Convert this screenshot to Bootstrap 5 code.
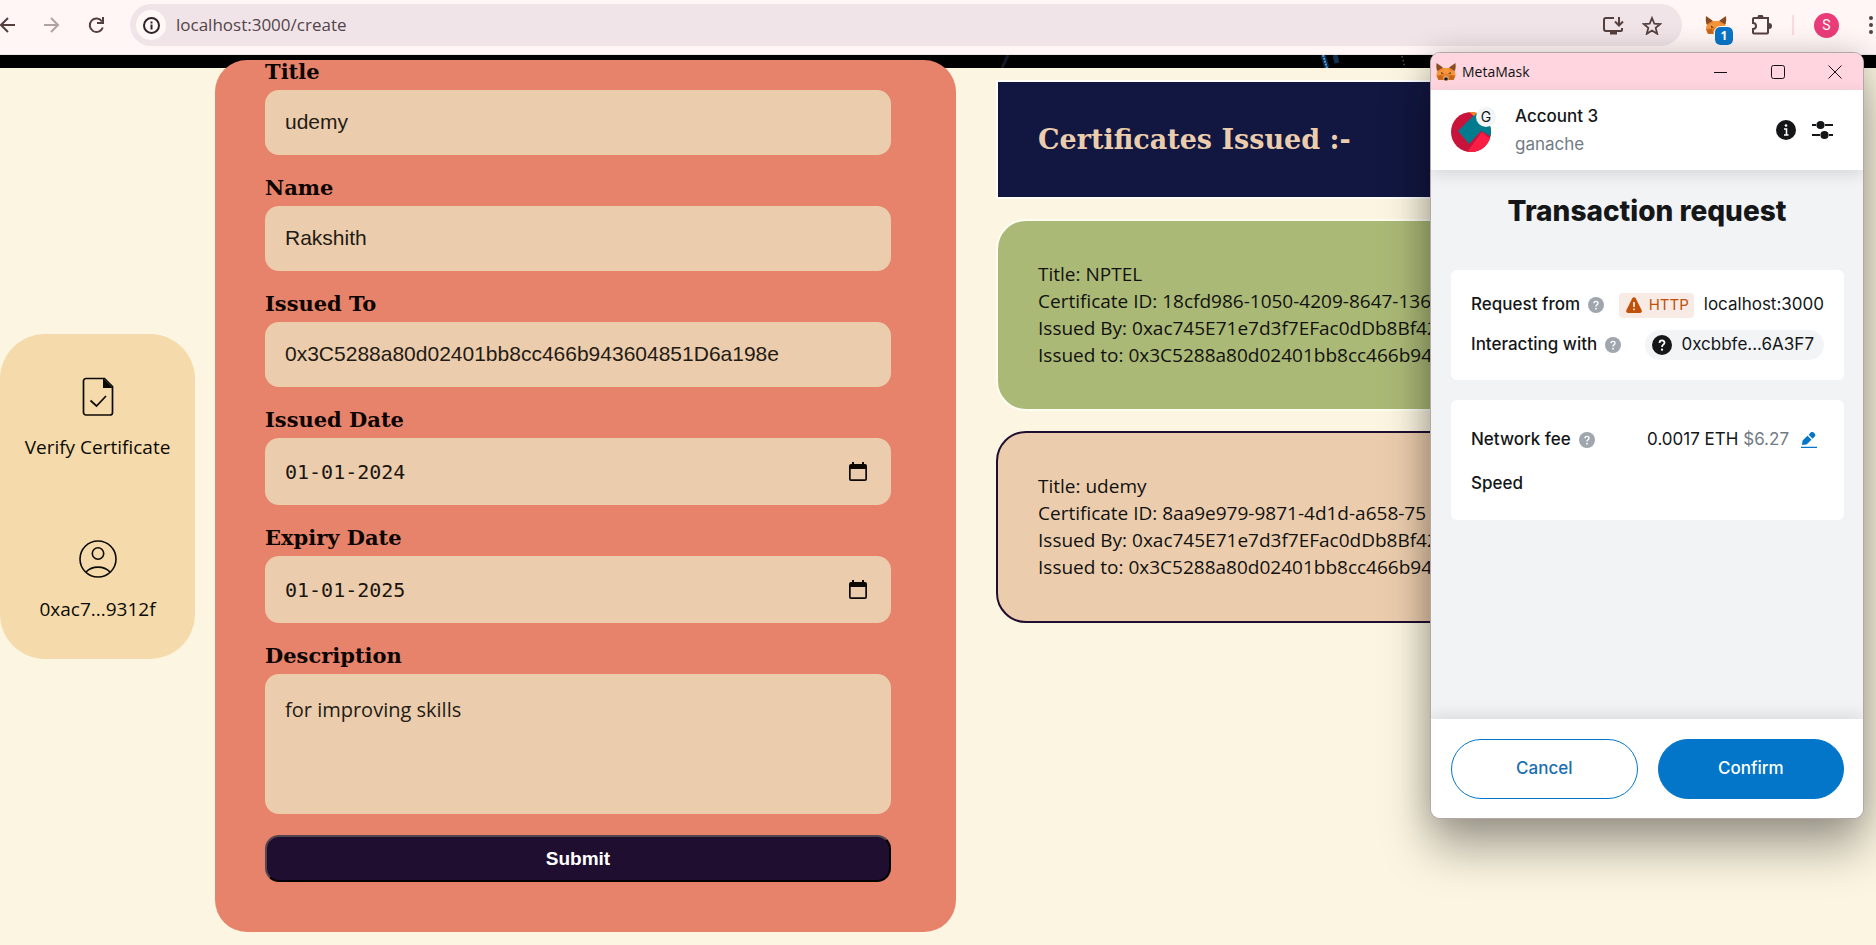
<!DOCTYPE html>
<html lang="en">
<head>
<meta charset="utf-8">
<meta name="viewport" content="width=device-width, initial-scale=1">
<title>Create certificate</title>
<link rel="stylesheet" href="https://cdn.jsdelivr.net/npm/bootstrap@5.3.0/dist/css/bootstrap.min.css">
<style>
:root{--ui:"Open Sans","Noto Sans",sans-serif;--slab:"DejaVu Serif",serif;--wallet:Inter,Roboto,sans-serif}
body{background:#fbf5e1;color:#111;font-family:var(--ui);min-height:100vh;overflow:hidden}
button{color:inherit}
svg{display:block;flex:none}
.plain{background:none;border:0;padding:0;line-height:1;flex:none}

/* browser toolbar */
.toolbar{height:55px;background:#fff6f5;border-bottom:1px solid #eee4e3;color:#54403f;padding-bottom:4px}
.nav-buttons{width:130px;gap:20px}
.omnibox{height:42px;border-radius:21px;background:#f1e4e8;padding:0 20px 0 6px;gap:18px}
.site-info{width:30px;height:30px;border-radius:50%;background:#fff8f7}
.omnibox input{background:none;border:0;outline:0;font-size:17px;color:#51444a;padding:0;margin-left:-8px}
.toolbar-end{width:194px;padding-left:23px;gap:20px}
.fox-badge{right:-6px;bottom:-10px;width:18px;height:18px;border-radius:5px;background:#0b76c8;color:#fff;font-size:12px;line-height:18px;font-weight:700;outline:1px solid #fff6f5}
.profile{width:25px;height:25px;border-radius:50%;background:#ea3c78;color:#fff;font:14px/25px Roboto,sans-serif;text-align:center}
.toolbar-rule{width:2px;height:20px;background:#fbd9df}

/* page */
.banner{height:13px;background:#000}
.page-body{margin-top:-8px;padding-bottom:13px}
.side-menu{flex:0 0 195px;background:#f5dbac;border-radius:45px;padding:41px 10px 36px;gap:76px}
.side-menu a{color:#0c0a06;font-size:19px;line-height:28px;gap:14px}
.cert-form{flex:0 0 39.5%;margin-left:20px;background:#e7836a;border-radius:32px;padding:0 65px 50px 50px;gap:21px}
.cert-form label{font:700 21px/24px var(--slab);color:#0c0400;margin-bottom:6px}
.field{background:#ebcdad;border:0;border-radius:14px;padding:0 20px 2px;height:65px;font:21px/28px "Liberation Sans",Arial,sans-serif;color:#241a14;width:100%}
.date-box{height:67px;display:flex;align-items:center;padding:0 24px 0 20px}
.date-box input{background:none;border:0;outline:0;padding:0;font:20px/28px "DejaVu Sans Mono",monospace;color:#1c1510}
textarea.field{height:140px;padding:20px;line-height:32px;font-family:var(--ui);font-size:20px;resize:none;display:block}
.submit{height:47px;background:#200e31;color:#fff;border:2px outset #000;border-color:#54464f #000 #000 #54464f;border-radius:14px;font:700 19px/24px "Liberation Sans",Arial,sans-serif}
.issued{margin:20px 36px 0 40px;gap:20px}
.issued-head{background:#121741;border:2px solid #fff;padding:40px}
.issued-head h1{font:700 27px/35px var(--slab);color:#ebcdad;margin:0}
.cert{background:#abb977;border:2px solid #fdfdf2;border-radius:30px;padding:40px;font-size:19px;line-height:27px;white-space:nowrap;overflow:hidden}
.cert.own{background:#ebcdad;border-color:#200e31}

/* wallet window */
.wallet{top:52px;right:12px;width:434px;border:1px solid #b4a7a8;border-radius:10px;background:#f2f3f5;overflow:hidden;box-shadow:0 28px 48px rgba(0,0,0,.36),0 0 30px rgba(0,0,0,.14);font-family:var(--wallet);font-size:17px;color:#141618}
.title-bar{height:37px;background:#ffd6df;padding:0 21px 0 5px;font:14px/20px var(--ui);color:#111;gap:43px}
.title-bar .app{gap:6px}
.account{height:80px;background:#fff;padding:0 30px 0 20px;box-shadow:0 4px 16px rgba(0,0,0,.12)}
.account .who{line-height:28px}
.muted-txt{color:#727b84}
.chain{top:-5px;right:-5px;width:20px;height:20px;border-radius:50%;background:#f2f4f6;font:14px/20px var(--wallet);text-align:center}
.wallet h2{font-size:28px;line-height:40px;font-weight:800;margin:21px 0 39px;text-align:center}
.panel{background:#fff;border-radius:6px;margin:0 19px 20px 20px;padding:15px 20px}
.panel .line{height:40px}
.panel.fee{padding:20px 20px 16px;gap:4px}
.key{font-weight:500;gap:8px}
.http{height:25px;background:#f8eae4;color:#bf5208;border-radius:4px;padding:0 5px 0 7px;margin-right:10px;gap:7px;font-size:15px}
.addr{height:30px;border-radius:15px;background:#f2f4f6;padding:0 10px 0 7px;gap:9px}
.edit{padding:0 7px 0 5px;margin-left:7px}
.actions{height:99px;background:#fff;margin-top:179px;padding:0 19px 0 20px;gap:20px;box-shadow:0 -4px 16px rgba(0,0,0,.1)}
.actions button{height:60px;border-radius:30px;border:1px solid #0376c9;font-size:17px;font-weight:500;flex:1}
.actions .cancel{background:#fff;color:#1a6fb0}
.actions .confirm{background:#0376c9;color:#fff}
</style>
</head>
<body class="position-relative">
<svg width="0" height="0" class="position-absolute" aria-hidden="true">
  <symbol id="fox" viewBox="0 0 20 18">
    <path fill="#e88128" d="M1 1l5 4h8l5-4-.5 8 1 4-2 4-5 0-1.500 1h-2L7.500 17l-5 0-2-4 1-4z"/>
    <path fill="#8a4a22" d="M.5 0L7 4.500 1 8 .3 4zM19.500 0L13 4.500 19 8l.7-4z"/>
    <path fill="#f6953a" d="M1 9l6-2.500 1 4.500-7.500 1.500zM19 9l-6-2.500-1 4.500 7.500 1.500zM7 5h6l-1 6H8z"/>
    <path fill="#c9661b" d="M1 13l5-1 1.500 4.500-5 .5zM19 13l-5-1-1.500 4.500 5 .5z"/>
    <path fill="#3a2a24" d="M5 9l3 1.800-2.500 0zM15 9l-3 1.800 2.500 0z"/>
    <path fill="#d9c6b5" d="M7.500 15l1-1.500h3l1 1.500-.5 2.500H8z"/>
    <path fill="#17191c" d="M8.500 14.500h3l.3 2-1 .8H9.200l-1-.8z"/>
  </symbol>
  <symbol id="help" viewBox="0 0 16 16">
    <circle cx="8" cy="8" r="8" fill="currentColor"/>
    <path d="M6 6.300c0-2.600 4-2.600 4-.1C10 7.800 8 7.700 8 9.500" fill="none" stroke="#fff" stroke-width="1.400"/><circle cx="8" cy="11.700" r=".9" fill="#fff"/>
  </symbol>
  <symbol id="calendar" viewBox="0 0 18 20">
    <path d="M2 2h1V0h2v2h8V0h2v2h1a2 2 0 0 1 2 2v13a2 2 0 0 1-2 2H2a2 2 0 0 1-2-2V4a2 2 0 0 1 2-2zm-.3 5v10.300h14.600V7z" fill="#0c0905" fill-rule="evenodd"/>
  </symbol>
</svg>

<header class="toolbar d-flex align-items-center">
  <div class="nav-buttons d-flex align-items-center">
    <button class="plain" aria-label="Back"><svg width="16" height="16" viewBox="0 0 16 16" fill="none" stroke="currentColor" stroke-width="2"><path d="M15 8H1M8 1L1 8l7 7"/></svg></button>
    <button class="plain ms-2" aria-label="Forward"><svg width="16" height="16" viewBox="0 0 16 16" fill="none" stroke="#b0a2a1" stroke-width="2"><path d="M0 8h14M7 1l7 7-7 7"/></svg></button>
    <button class="plain ms-2" aria-label="Reload"><svg width="17" height="17" viewBox="0 0 17 17" fill="none" stroke="currentColor" stroke-width="2"><path d="M14.800 10.500A6.700 6.700 0 1 1 14 4.500M15 0v6h-6"/></svg></button>
  </div>
  <div class="omnibox d-flex align-items-center flex-fill">
    <button class="site-info plain d-flex align-items-center justify-content-center" aria-label="Site information"><svg width="17" height="17" viewBox="0 0 17 17" fill="none" stroke="#2e2427" stroke-width="2"><circle cx="8.500" cy="8.500" r="7.500"/><path d="M8.500 7.500V12.500M8.500 4.500v2"/></svg></button>
    <input class="flex-fill" aria-label="Address" value="localhost:3000/create">
    <button class="plain" aria-label="Install app"><svg width="21" height="19" viewBox="0 0 21 19" fill="none" stroke="currentColor" stroke-width="2"><path d="M11 2H3a2 2 0 0 0-2 2v9a2 2 0 0 0 2 2h15a1 1 0 0 0 1-1v-2M16 1v8M12 5.500l4 4 4-4"/><path d="M7 17h7" stroke-width="3"/></svg></button>
    <button class="plain" aria-label="Bookmark"><svg width="20" height="19" viewBox="0 0 20 19" fill="none" stroke="currentColor" stroke-width="1.800"><path d="M10 2l2.300 5.600 6 .4-4.600 3.900 1.500 5.900L10 14.600l-5.200 3.200 1.500-5.900L1.700 8l6-.4z"/></svg></button>
  </div>
  <div class="toolbar-end d-flex align-items-center">
    <button class="plain position-relative" aria-label="MetaMask, 1 notification"><svg width="22" height="19"><use href="#fox"/></svg><span class="fox-badge position-absolute">1</span></button>
    <button class="plain ms-1" aria-label="Extensions"><svg width="21" height="21" viewBox="0 0 21 21" fill="none" stroke="currentColor" stroke-width="2"><path d="M3 3h14v14.500a1 1 0 0 1-1 1H3a1 1 0 0 1-1-1V14a3 3 0 0 0 0-6V4a1 1 0 0 1 1-1z"/><path d="M7.500 2.500a2 2 0 0 1 4 0M18 9a2 2 0 0 1 0 4" fill="currentColor"/></svg></button>
    <span class="toolbar-rule"></span>
    <button class="plain profile" aria-label="Profile">S</button>
    <button class="plain ms-2" aria-label="Menu"><svg width="6" height="20" viewBox="0 0 6 20" fill="currentColor"><circle cx="4" cy="3" r="2"/><circle cx="4" cy="10" r="2"/><circle cx="4" cy="17" r="2"/></svg></button>
  </div>
</header>

<div class="banner d-flex justify-content-end">
  <svg width="900" height="13" viewBox="0 0 900 13" fill="none">
    <path d="M26 13L32 0" stroke="#131a24" stroke-width="3"/>
    <path d="M347 0l4 13" stroke="#0d2f52" stroke-width="5"/><path d="M347 0l4 13" stroke="#5aa0dc" stroke-width="2" stroke-dasharray="2 1"/>
    <path d="M359 0l2 8" stroke="#10324f" stroke-width="5"/>
    <path d="M426 1l3 12" stroke="#4a4f58" stroke-width="1.500" stroke-dasharray="1.500 2.500"/>
  </svg>
</div>

<main class="page-body d-flex">
  <nav class="side-menu d-flex flex-column align-self-center">
    <a href="#" class="d-flex flex-column align-items-center text-decoration-none">
      <svg width="40" height="44" viewBox="0 0 40 44"><path d="M7.500 3.500h19l8 8v26a2.500 2.500 0 0 1-2.500 2.500H8A2.500 2.500 0 0 1 5.500 37.500V6A2.500 2.500 0 0 1 8 3.500z" fill="none" stroke="#0c0a06" stroke-width="1.700"/><path d="M25 3l10 10H25z" fill="#0c0a06"/><path d="M12.500 25.500l6 5.500 9.500-10" fill="none" stroke="#0c0a06" stroke-width="1.700"/></svg>
      <span>Verify Certificate</span>
    </a>
    <a href="#" class="d-flex flex-column align-items-center text-decoration-none">
      <svg width="44" height="44" viewBox="0 0 44 44" fill="none" stroke="#0c0a06" stroke-width="1.600"><circle cx="22" cy="22" r="18"/><circle cx="22" cy="16.500" r="5.700"/><path d="M10 35c6-6.500 18-6.500 24 0"/></svg>
      <span>0xac7...9312f</span>
    </a>
  </nav>

  <form class="cert-form d-flex flex-column" onsubmit="return false">
    <div><label class="d-block" for="title">Title</label><input id="title" class="field" value="udemy"></div>
    <div><label class="d-block" for="name">Name</label><input id="name" class="field" value="Rakshith"></div>
    <div><label class="d-block" for="to">Issued To</label><input id="to" class="field" value="0x3C5288a80d02401bb8cc466b943604851D6a198e"></div>
    <div><label class="d-block" for="from">Issued Date</label><div class="field date-box"><input id="from" class="flex-fill" value="01-01-2024"><button type="button" class="plain" aria-label="Pick issued date"><svg width="18" height="20"><use href="#calendar"/></svg></button></div></div>
    <div><label class="d-block" for="until">Expiry Date</label><div class="field date-box"><input id="until" class="flex-fill" value="01-01-2025"><button type="button" class="plain" aria-label="Pick expiry date"><svg width="18" height="20"><use href="#calendar"/></svg></button></div></div>
    <div><label class="d-block" for="about">Description</label><textarea id="about" class="field">for improving skills</textarea></div>
    <button class="submit">Submit</button>
  </form>

  <section class="issued d-flex flex-column flex-fill overflow-hidden">
    <div class="issued-head"><h1>Certificates Issued :-</h1></div>
    <div class="cert">
      <div>Title: NPTEL</div><div>Certificate ID: 18cfd986-1050-4209-8647-136</div><div>Issued By: 0xac745E71e7d3f7EFac0dDb8Bf42</div><div>Issued to: 0x3C5288a80d02401bb8cc466b94</div>
    </div>
    <div class="cert own">
      <div>Title: udemy</div><div>Certificate ID: 8aa9e979-9871-4d1d-a658-75</div><div>Issued By: 0xac745E71e7d3f7EFac0dDb8Bf42</div><div>Issued to: 0x3C5288a80d02401bb8cc466b94</div>
    </div>
  </section>
</main>

<aside class="wallet position-absolute d-flex flex-column">
  <div class="title-bar d-flex align-items-center">
    <span class="app d-flex align-items-center me-auto"><svg width="20" height="18"><use href="#fox"/></svg>MetaMask</span>
    <button class="plain" aria-label="Minimize"><svg width="14" height="14" stroke="#111"><path d="M0 7.500h13"/></svg></button>
    <button class="plain" aria-label="Maximize"><svg width="14" height="14" fill="none" stroke="#111"><rect x=".5" y=".5" width="13" height="13" rx="2"/></svg></button>
    <button class="plain" aria-label="Close"><svg width="14" height="14" stroke="#111"><path d="M.5 .5l13 13M13.500 .5l-13 13"/></svg></button>
  </div>
  <div class="account d-flex align-items-center">
    <div class="position-relative mt-1">
      <svg width="40" height="40" viewBox="0 0 40 40"><clipPath id="disc"><circle cx="20" cy="20" r="20"/></clipPath><g clip-path="url(#disc)"><path fill="#c8143a" d="M0 0h40v40H0z"/><path fill="#fa1e44" d="M14 43l17-23 14 12v12z"/><path fill="#017b8e" d="M7 19L27-1l16 14v13L30 19 18 32z"/><path fill="#f08a1c" d="M18 0h9l-4 4z"/></g></svg>
      <span class="chain position-absolute">G</span>
    </div>
    <div class="who ms-4 me-auto"><div class="fw-medium">Account 3</div><div class="muted-txt">ganache</div></div>
    <button class="plain" aria-label="Details"><svg width="20" height="20" viewBox="0 0 20 20"><circle cx="10" cy="10" r="10" fill="#141618"/><path d="M8 9h2.500v6M8 15h4.500" fill="none" stroke="#fff" stroke-width="1.600"/><circle cx="10" cy="5.500" r="1.300" fill="#fff"/></svg></button>
    <button class="plain ms-3" aria-label="Settings"><svg width="21" height="20" viewBox="0 0 21 20" stroke="#141618" stroke-width="1.800" fill="#141618"><path d="M0 5h4M13 5h8M0 15h8M17 15h4"/><circle cx="8.500" cy="5" r="3.200"/><circle cx="12.500" cy="15" r="3.200"/></svg></button>
  </div>
  <h2>Transaction request</h2>
  <div class="panel">
    <div class="line d-flex align-items-center">
      <span class="key d-flex align-items-center me-auto">Request from <svg width="16" height="16" color="#9fa6ae"><use href="#help"/></svg></span>
      <span class="http d-flex align-items-center"><svg width="16" height="16" viewBox="0 0 16 16"><path d="M6.300 1.200a2 2 0 0 1 3.400 0l6 12a2 2 0 0 1-1.700 2.800H2A2 2 0 0 1 .3 13.200z" fill="#bf5208"/><path d="M8 5v5M8 11.500v1.700" stroke="#fff" stroke-width="1.500"/></svg>HTTP</span>
      <span>localhost:3000</span>
    </div>
    <div class="line d-flex align-items-center">
      <span class="key d-flex align-items-center me-auto">Interacting with <svg width="16" height="16" color="#9fa6ae"><use href="#help"/></svg></span>
      <span class="addr d-flex align-items-center"><svg width="20" height="20" color="#141618"><use href="#help"/></svg>0xcbbfe...6A3F7</span>
    </div>
  </div>
  <div class="panel fee d-flex flex-column">
    <div class="line d-flex align-items-center">
      <span class="key d-flex align-items-center me-auto">Network fee <svg width="16" height="16" color="#9fa6ae"><use href="#help"/></svg></span>
      <span>0.0017 ETH <span class="muted-txt">$6.27</span></span>
      <button class="plain edit" aria-label="Edit fee"><svg width="16" height="16" viewBox="0 0 16 16" fill="#0376c9"><path d="M0 14.700h16V16H0zM1 13l.6-4.500L6.500 3.800l4 4L5.500 12.500zM7.700 2.700l1.800-1.900a2.300 2.300 0 0 1 3.400 0l.6.700a2.300 2.300 0 0 1 0 3.300l-1.900 1.900z"/></svg></button>
    </div>
    <div class="line d-flex align-items-center"><span class="key">Speed</span></div>
  </div>
  <div class="actions d-flex align-items-center">
    <button class="cancel">Cancel</button>
    <button class="confirm">Confirm</button>
  </div>
</aside>
<script src="https://cdn.jsdelivr.net/npm/bootstrap@5.3.0/dist/js/bootstrap.bundle.min.js"></script>
</body>
</html>
